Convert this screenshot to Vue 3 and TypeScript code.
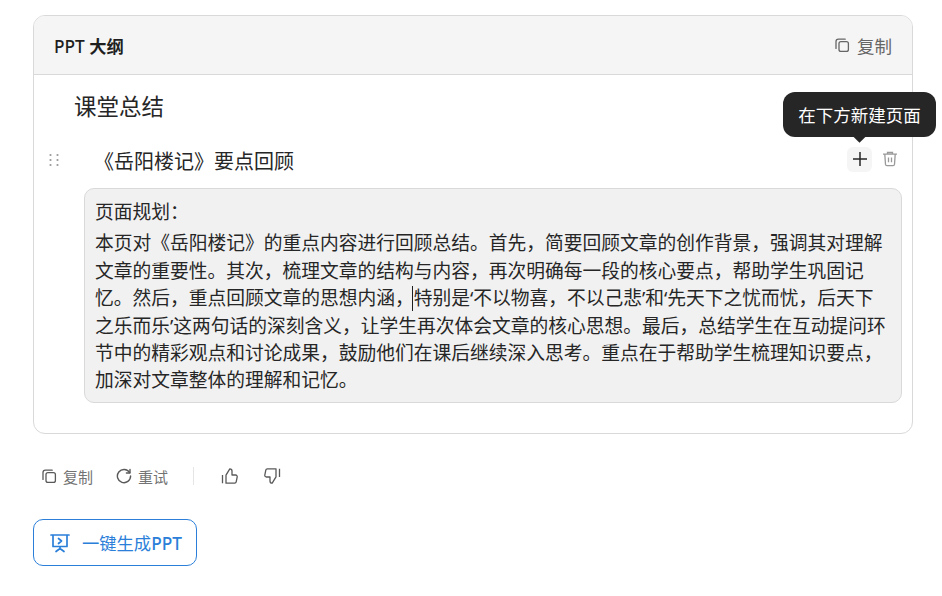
<template>
  <div class="page">
    <div class="outline-card">
      <div class="card-head">
        <span class="head-title">PPT <b>大纲</b></span>
        <span class="head-copy">
          <svg width="16" height="16" viewBox="0 0 16 16" fill="none" stroke="currentColor" stroke-width="1.3">
            <rect x="5" y="4.6" width="9.4" height="9.8" rx="2" />
            <path d="M11.2 2.2H4.4a2.4 2.4 0 0 0-2.4 2.4v6.8" stroke-linecap="round" />
          </svg>
          复制
        </span>
      </div>
      <div class="card-body">
        <h3 class="section-title">{{ outline.section }}</h3>
        <div class="page-row">
          <svg class="grip" width="12" height="14" viewBox="0 0 12 14" fill="#999">
            <circle v-for="d in gripDots" :key="d.x + '-' + d.y" :cx="d.x" :cy="d.y" r="1.1" />
          </svg>
          <span class="page-title">{{ outline.title }}</span>
          <span class="row-actions">
            <span class="add-btn">
              <svg width="16" height="16" viewBox="0 0 16 16" stroke="#262626" stroke-width="1.5">
                <path d="M8 1v14M1 8h14" />
              </svg>
              <span class="tooltip">在下方新建页面</span>
            </span>
            <svg class="trash" width="16" height="16" viewBox="0 0 16 16" fill="none" stroke="#999" stroke-width="1.3">
              <path d="M1 3.2h14M5.500 3V1.500h5V3M2.800 3.400l.7 10a1.400 1.400 0 0 0 1.400 1.200h6.200a1.400 1.400 0 0 0 1.400-1.200l.7-10M6.500 6.500v4.800M9.500 6.500v4.800" />
            </svg>
          </span>
        </div>
        <div class="plan-box">
          <div class="plan-label">页面规划：</div>
          <div class="plan-text">{{ planBefore }}<span class="caret"></span>{{ planAfter }}</div>
        </div>
      </div>
    </div>

    <div class="msg-actions">
      <span class="msg-btn">
        <svg width="16" height="16" viewBox="0 0 16 16" fill="none" stroke="currentColor" stroke-width="1.3">
          <rect x="5" y="4.6" width="9.4" height="9.8" rx="2" />
          <path d="M11.2 2.2H4.4a2.4 2.4 0 0 0-2.4 2.4v6.8" stroke-linecap="round" />
        </svg>
        复制
      </span>
      <span class="msg-btn">
        <svg width="16" height="16" viewBox="0 0 16 16" fill="none" stroke="currentColor" stroke-width="1.4">
          <path d="M13.600 4.600A6.600 6.600 0 1 0 14.600 8" stroke-linecap="round" />
          <path d="M14 1.400v3.600h-3.600" stroke-linecap="round" stroke-linejoin="round" />
        </svg>
        重试
      </span>
      <span class="divider"></span>
      <svg class="thumb" width="18" height="18" viewBox="0 0 18 18" fill="none" stroke="#595959" stroke-width="1.3" stroke-linejoin="round">
        <path d="M1.500 8v8.200M5 16.200h8.600a1.600 1.600 0 0 0 1.600-1.300l1-5a1.600 1.600 0 0 0-1.600-1.900H11V4a2.200 2.200 0 0 0-2.200-2.200L5 8.200z" />
      </svg>
      <svg class="thumb" width="18" height="18" viewBox="0 0 18 18" fill="none" stroke="#595959" stroke-width="1.3" stroke-linejoin="round">
        <path d="M16.500 10V1.800M13 1.800H4.400a1.600 1.600 0 0 0-1.600 1.300l-1 5A1.600 1.600 0 0 0 3.400 10H7v4a2.200 2.200 0 0 0 2.200 2.200L13 9.800z" />
      </svg>
    </div>

    <button class="gen-btn">
      <svg width="20" height="20" viewBox="0 0 20 20" fill="none" stroke="#2b7fd9" stroke-width="1.7" stroke-linecap="round" stroke-linejoin="round">
        <path d="M1 2h18M3 2v11.500h14V2M10 13.500v2M6 18.500l4-3 4 3M8.500 5.500L11.500 8l-3 2.500" />
      </svg>
      <span>一键生成<b>PPT</b></span>
    </button>
  </div>
</template>

<script setup lang="ts">
const outline = {
  section: "课堂总结",
  title: "《岳阳楼记》要点回顾",
};

const planBefore =
  "本页对《岳阳楼记》的重点内容进行回顾总结。首先，简要回顾文章的创作背景，强调其对理解文章的重要性。其次，梳理文章的结构与内容，再次明确每一段的核心要点，帮助学生巩固记忆。然后，重点回顾文章的思想内涵，";
const planAfter =
  "特别是‘不以物喜，不以己悲’和‘先天下之忧而忧，后天下之乐而乐’这两句话的深刻含义，让学生再次体会文章的核心思想。最后，总结学生在互动提问环节中的精彩观点和讨论成果，鼓励他们在课后继续深入思考。重点在于帮助学生梳理知识要点，加深对文章整体的理解和记忆。";

const gripDots = [0, 1, 2].flatMap((r) =>
  [0, 1].map((c) => ({ x: 2.5 + c * 7, y: 2 + r * 5 })),
);
</script>

<style>
html,
body {
  background: #fff;
}
</style>

<style scoped>
.page {
  width: 942px;
  height: 596px;
  box-sizing: border-box;
  padding: 15px 29px 0 33px;
  overflow: hidden;
  font-family: "Noto Sans", "Noto Sans CJK SC", sans-serif;
  color: #262626;
}

.outline-card {
  border: 1px solid #d9d9d9;
  border-radius: 12px;
  height: 419px;
  box-sizing: border-box;
}

.card-head {
  height: 59px;
  box-sizing: border-box;
  display: flex;
  align-items: center;
  justify-content: space-between;
  padding: 0 20px;
  background: #f5f5f5;
  border-bottom: 1px solid #d9d9d9;
  border-radius: 11px 11px 0 0;
}

.head-title {
  font-size: 17.3px;
  font-weight: 500;
  color: #1f1f1f;
}

.head-copy {
  display: inline-flex;
  align-items: center;
  gap: 7px;
  font-size: 17.5px;
  color: #666;
}

.card-body {
  padding: 16px 10px 0 14px;
}

.section-title {
  margin: 0 0 0 26px;
  font-size: 22.5px;
  line-height: 32px;
  font-weight: 400;
}

.page-row {
  display: flex;
  align-items: center;
  height: 32px;
  margin-top: 21px;
}

.grip {
  flex: none;
}

.page-title {
  margin-left: 34px;
  font-size: 20px;
}

.row-actions {
  margin-left: auto;
  margin-top: -2px;
  display: flex;
  align-items: center;
  gap: 10px;
  padding-right: 4px;
}

.add-btn {
  position: relative;
  width: 25px;
  height: 25px;
  display: flex;
  align-items: center;
  justify-content: center;
  background: #f5f5f5;
  border-radius: 6px;
}

.tooltip {
  position: absolute;
  right: -64px;
  bottom: 35px;
  width: 153px;
  height: 45px;
  display: flex;
  align-items: center;
  justify-content: center;
  background: #262626;
  color: #fff;
  font-size: 17.5px;
  border-radius: 12px;
  white-space: nowrap;
}

.tooltip::after {
  content: "";
  position: absolute;
  left: 71.5px;
  bottom: -4px;
  width: 9px;
  height: 9px;
  background: #262626;
  transform: rotate(45deg);
}

.plan-box {
  margin: 12px 0 0 36px;
  padding: 9px 10px 8px;
  width: 818px;
  box-sizing: border-box;
  background: #f1f1f1;
  border: 1px solid #d9d9d9;
  border-radius: 10px;
  font-size: 18.75px;
  line-height: 27.4px;
}

.plan-label {
  margin-bottom: 4px;
}

.caret {
  position: relative;
  display: inline-block;
  width: 0;
  height: 0;
}

.caret::after {
  content: "";
  position: absolute;
  left: -2px;
  bottom: -6px;
  width: 1px;
  height: 25px;
  background: #1f1f1f;
}

.msg-actions {
  display: flex;
  align-items: center;
  height: 32px;
  margin-top: 26px;
  padding-left: 8px;
}

.msg-btn {
  display: inline-flex;
  align-items: center;
  gap: 6px;
  margin-right: 23px;
  font-size: 15px;
  color: #737373;
}

.msg-btn svg {
  color: #595959;
}

.divider {
  width: 1px;
  height: 18px;
  background: #e5e5e5;
  margin: 0 27px 0 2px;
}

.thumb {
  margin-right: 24px;
}

.gen-btn {
  display: flex;
  align-items: center;
  gap: 12px;
  width: 164px;
  height: 47px;
  margin-top: 27px;
  padding: 0 0 0 16px;
  box-sizing: border-box;
  background: #fff;
  border: 1px solid #2b7fd9;
  border-radius: 10px;
  font-family: inherit;
  font-size: 17.3px;
  color: #2b7fd9;
}

.gen-btn b {
  font-weight: 500;
}
</style>
